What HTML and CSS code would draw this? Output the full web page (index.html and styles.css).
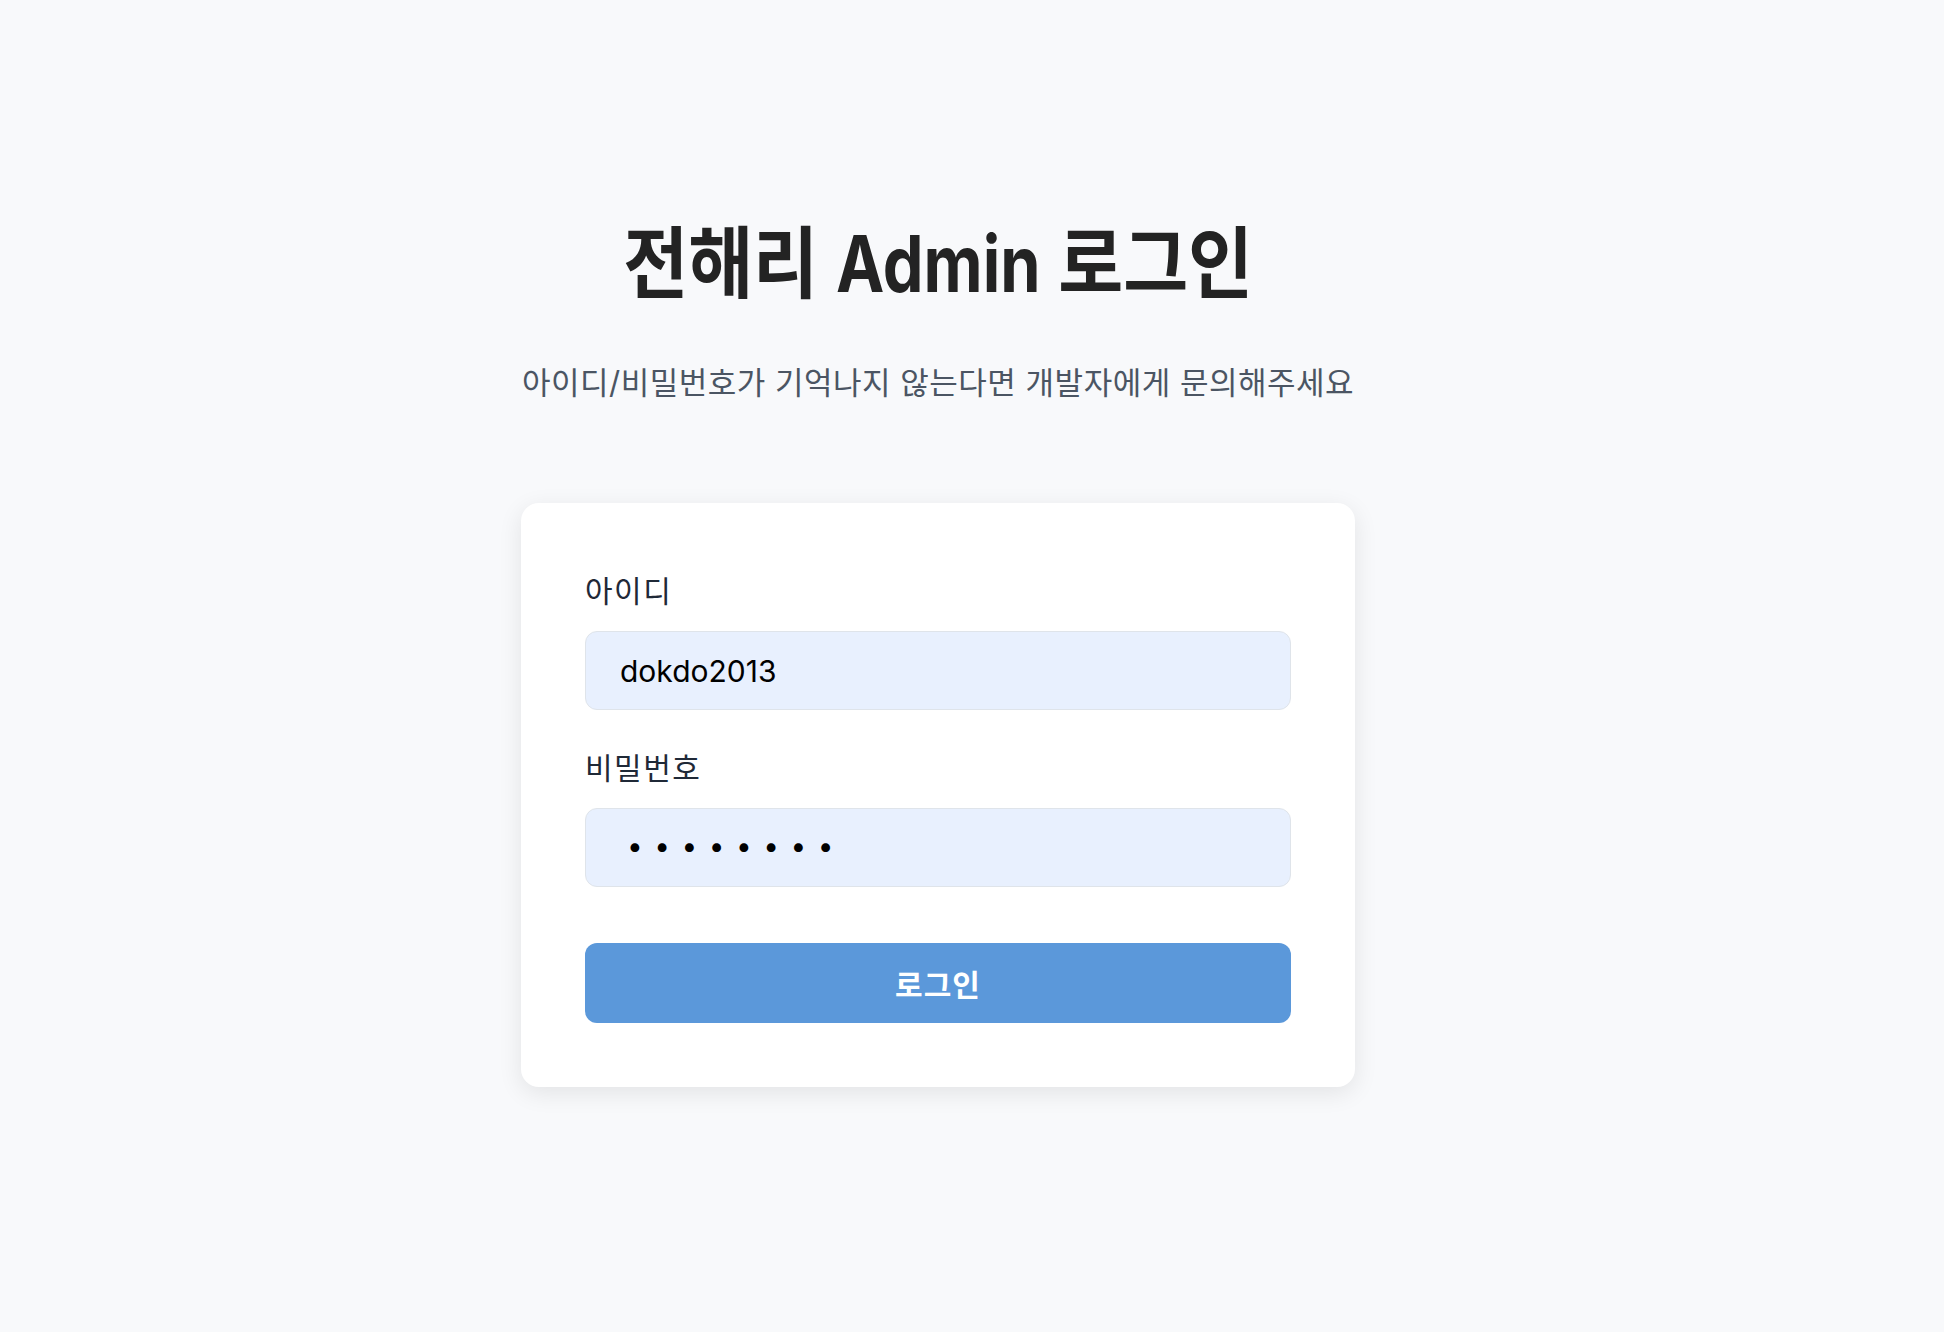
FILE: index.html
```html
<!DOCTYPE html>
<html lang="ko">
<head>
<meta charset="utf-8">
<title>전해리 Admin 로그인</title>
<link rel="stylesheet" href="styles.css">
</head>
<body>
<main class="page">
  <h1 class="title"><span class="title-ko">전해리</span> <span class="title-en">Admin</span> <span class="title-ko">로그인</span></h1>
  <p class="subtitle">아이디/비밀번호가 기억나지 않는다면 개발자에게 문의해주세요</p>
  <form class="card">
    <div class="field">
      <label class="label" for="uid">아이디</label>
      <input class="input" id="uid" type="text" value="dokdo2013">
    </div>
    <div class="field">
      <label class="label" for="pw">비밀번호</label>
      <input class="input input-pw" id="pw" type="password" value="12345678">
    </div>
    <button class="button" type="button">로그인</button>
  </form>
</main>
</body>
</html>
```

FILE: styles.css
```css
* { box-sizing: border-box; }
html, body { margin: 0; padding: 0; }
body {
  background: #f8f9fb;
  font-family: Inter, "Noto Sans CJK KR", sans-serif;
  color: #1f2937;
  min-height: 1332px;
}
.page {
  display: flex;
  flex-direction: column;
  align-items: center;
  padding: 217px 68px 0 0;
}
.title {
  margin: 0;
  font-size: 78px;
  line-height: 94px;
  font-weight: 700;
  color: #232323;
  white-space: nowrap;
}
.title-ko {
  display: inline-block;
  transform: scaleX(0.905);
  margin: 0 -11px;
}
.title-en {
  display: inline-block;
  transform: scaleX(0.83);
  margin: 0 -21px;
}
.subtitle {
  margin: 48px 0 0;
  font-size: 31px;
  line-height: 48px;
  color: #4b5563;
  letter-spacing: 0.5px;
}
.card {
  margin-top: 96px;
  width: 834px;
  background: #fff;
  border-radius: 18px;
  padding: 64px;
  box-shadow: 0 6px 24px rgba(0, 0, 0, 0.09);
  display: flex;
  flex-direction: column;
}
.field { display: flex; flex-direction: column; }
.field + .field { margin-top: 34px; }
.label {
  font-size: 30px;
  line-height: 48px;
  margin-bottom: 16px;
  color: #1f2937;
  letter-spacing: 1.5px;
}
.input {
  height: 79px;
  width: 100%;
  border: 1.5px solid #dfe4ea;
  border-radius: 12px;
  background: #e8f0fe;
  padding: 0 0 0 34px;
  font-family: Inter, "Noto Sans CJK KR", sans-serif;
  font-size: 30px;
  color: #000;
  outline: none;
}
.input-pw {
  letter-spacing: 11.5px;
  font-size: 28px;
  padding: 0 0 4px 41px;
}
.button {
  margin-top: 56px;
  height: 80px;
  border: 0;
  border-radius: 12px;
  background: #5b98da;
  color: #fff;
  font-family: Inter, "Noto Sans CJK KR", sans-serif;
  font-size: 30px;
  font-weight: 700;
  letter-spacing: 1px;
}
```
